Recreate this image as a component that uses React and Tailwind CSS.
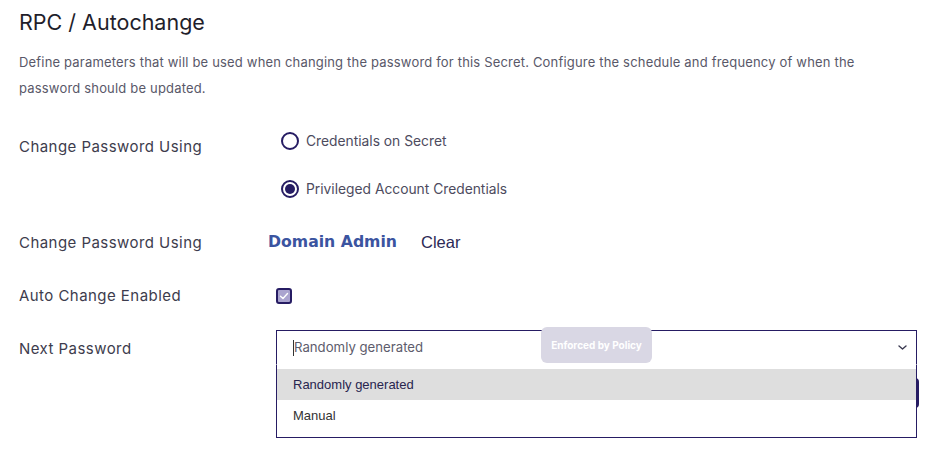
import React, { useState } from "react";

function Radio({ checked, label, onClick }) {
  return (
    <button onClick={onClick} className="flex items-center h-[48px] pl-[5px] text-left">
      <span className="w-[18px] h-[18px] rounded-full border-2 border-[#261c63] flex items-center justify-center">
        {checked && <span className="w-[10px] h-[10px] rounded-full bg-[#261c63]" />}
      </span>
      <span className="ml-[7px] text-[13.8px] text-[#4d4b5e]">{label}</span>
    </button>
  );
}

export default function App() {
  const [using, setUsing] = useState("privileged");
  const [auto, setAuto] = useState(true);

  return (
    <div className="w-[942px] h-[458px] bg-white pl-[19px] pr-[25px] font-['Inter',sans-serif] overflow-hidden">
      {/* Header */}
      <h1 className="pt-[8px] text-[21.5px] leading-[28px] text-[#1f1e2b]">RPC / Autochange</h1>
      <p className="mt-[13px] w-[862px] text-[13px] leading-[26px] tracking-[0.18px] text-[#595869]">
        Define parameters that will be used when changing the password for this Secret. Configure the schedule and frequency of when the password should be updated.
      </p>

      {/* Form rows */}
      <div className="mt-[16px] text-[15px] tracking-[0.45px] text-[#3d3c4d]">
        <div className="flex h-[97px]">
          <div className="w-[257px] pt-[20px] leading-[20px]">Change Password Using</div>
          <div className="flex flex-col tracking-normal">
            <Radio checked={using === "secret"} label="Credentials on Secret" onClick={() => setUsing("secret")} />
            <Radio checked={using === "privileged"} label="Privileged Account Credentials" onClick={() => setUsing("privileged")} />
          </div>
        </div>

        <div className="flex items-center h-[56px]">
          <div className="w-[249px] pt-[2px]">Change Password Using</div>
          <span className="font-['DejaVu_Sans',sans-serif] font-bold text-[15.7px] tracking-normal text-[#3b54a0]">Domain Admin</span>
          <button className="ml-[24px] font-['Liberation_Sans',sans-serif] text-[16.5px] tracking-normal text-[#2b2956]">Clear</button>
        </div>

        <div className="flex items-center h-[50px] pt-[2px]">
          <div className="w-[257px]">Auto Change Enabled</div>
          <button
            onClick={() => setAuto(!auto)}
            className="w-[16px] h-[16px] rounded-[3px] border-2 border-[#261c63] bg-[#aaa4cf] flex items-center justify-center"
          >
            {auto && (
              <svg width="10" height="10" viewBox="0 0 10 10" fill="none">
                <path d="M1.5 5.2 L4 7.5 L8.5 2.5" stroke="white" strokeWidth="1.4" strokeLinecap="round" strokeLinejoin="round" />
              </svg>
            )}
          </button>
        </div>

        <div className="flex items-center h-[55px] tracking-normal">
          <div className="w-[257px] pt-[3px] tracking-[0.45px]">Next Password</div>
          <div className="relative flex-1">
            <div className="flex items-center h-[35px] border border-[#261c63] border-b-transparent pl-[16px] pr-[9px]">
              <span className="w-px h-[16px] bg-[#333]" />
              <span className="text-[13.2px] text-[#5d5c6c]">Randomly generated</span>
              <svg className="ml-auto" width="9" height="5" viewBox="0 0 9 5" fill="none">
                <path d="M1 1 L4.5 4 L8 1" stroke="#3a3950" strokeWidth="1.4" strokeLinecap="round" strokeLinejoin="round" />
              </svg>
            </div>

            {/* Enforced badge */}
            <div className="absolute left-[265px] top-[-3px] w-[111px] h-[36px] rounded-[6px] bg-[#d9d7e4] flex items-center justify-center text-[10px] font-bold text-white">
              Enforced by Policy
            </div>

            {/* Button partly hidden behind the menu */}
            <div className="absolute right-[-2px] top-[48px] w-[24px] h-[30px] rounded-[4px] bg-[#261c63]" />

            {/* Open options menu */}
            <div className="absolute left-0 right-0 top-full border border-t-0 border-[#261c63] bg-white pt-[4px] pb-[5px] font-['Liberation_Sans',sans-serif] text-[13px]">
              <div className="h-[31px] flex items-center pl-[16px] bg-[#dedede] text-[#28254f]">Randomly generated</div>
              <div className="h-[32px] flex items-center pl-[16px] text-[#333]">Manual</div>
            </div>
          </div>
        </div>
      </div>
    </div>
  );
}
